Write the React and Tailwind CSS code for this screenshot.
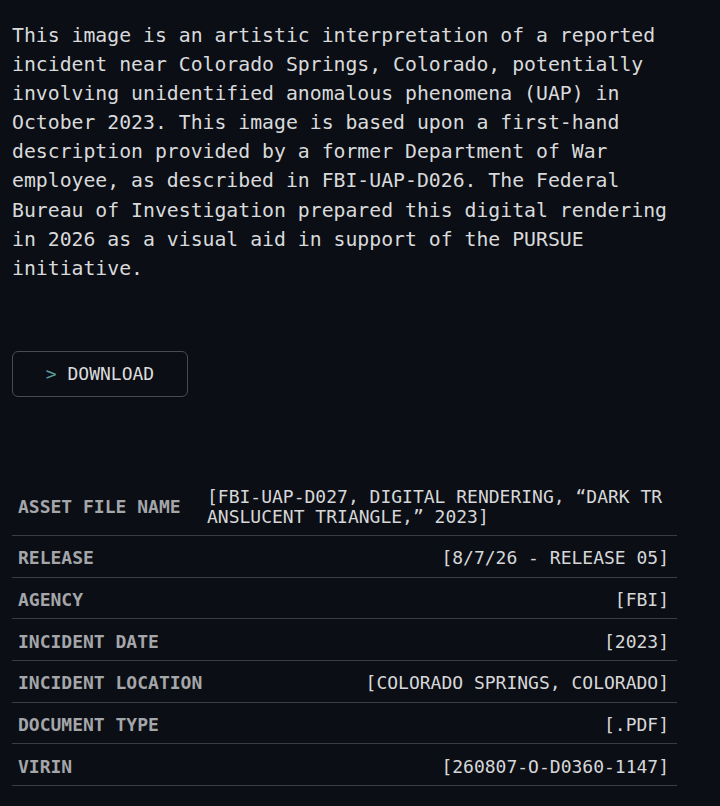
import React from "react";

const rows = [
    { label: "ASSET FILE NAME", value: "[FBI-UAP-D027, DIGITAL RENDERING, “DARK TRANSLUCENT TRIANGLE,” 2023]", wrap: true },
    { label: "RELEASE", value: "[8/7/26 - RELEASE 05]" },
    { label: "AGENCY", value: "[FBI]" },
    { label: "INCIDENT DATE", value: "[2023]" },
    { label: "INCIDENT LOCATION", value: "[COLORADO SPRINGS, COLORADO]" },
    { label: "DOCUMENT TYPE", value: "[.PDF]" },
    { label: "VIRIN", value: "[260807-O-D0360-1147]" },
];

const App = () => {
    return (
        <div className="min-h-screen bg-[#0b0e14] px-3 pt-[21px] pb-6 font-['DejaVu_Sans_Mono',monospace]">
            <p className="max-w-[680px] text-[19.8px] leading-[29.1px] text-[#d9dadc]">
                This image is an artistic interpretation of a reported incident near Colorado Springs, Colorado, potentially involving unidentified anomalous phenomena (UAP) in October 2023. This image is based upon a first-hand description provided by a former Department of War employee, as described in FBI-UAP-D026. The Federal Bureau of Investigation prepared this digital rendering in 2026 as a visual aid in support of the PURSUE initiative.
            </p>

            <button className="mt-[68px] flex h-[46px] w-[176px] items-center justify-center rounded-md border border-[#474b53] text-[18px] text-[#dcdcdc]">
                <span className="text-[#5b9ea0]">&gt;</span>
                <span className="whitespace-pre"> DOWNLOAD</span>
            </button>

            <div className="mt-[82px] w-[665px] text-[18px]">
                {rows.map((row) => (
                    <div
                        key={row.label}
                        className={`grid grid-cols-[195px_1fr] items-center border-b border-[#3a3d44] ${row.wrap ? "py-[8px] leading-[20px]" : "pt-[12.5px] pb-[7.5px] leading-[20.67px]"}`}
                    >
                        <div className="pl-[6px] font-bold text-[#a4a6aa]">{row.label}</div>
                        <div className={`pr-[8px] text-[#d6d7d9] ${row.wrap ? "break-all text-left" : "text-right"}`}>
                            {row.value}
                        </div>
                    </div>
                ))}
            </div>
        </div>
    );
};

export default App;
